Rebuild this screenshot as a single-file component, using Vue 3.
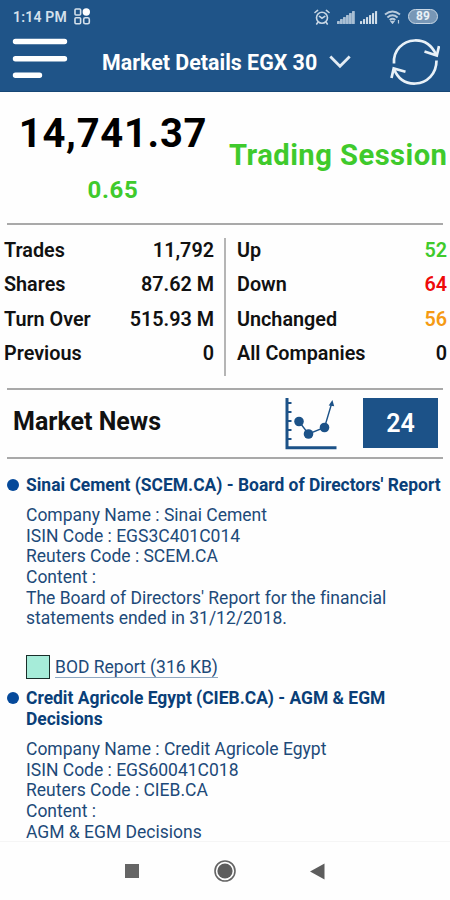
<script setup>
import { ref } from 'vue';

const index = ref({ name: 'Market Details EGX 30', value: '14,741.37', change: '0.65', status: 'Trading Session' });

const totals = [
    { label: 'Trades', value: '11,792' },
    { label: 'Shares', value: '87.62 M' },
    { label: 'Turn Over', value: '515.93 M' },
    { label: 'Previous', value: '0' }
];

const companies = [
    { label: 'Up', value: '52', type: 'up' },
    { label: 'Down', value: '64', type: 'down' },
    { label: 'Unchanged', value: '56', type: 'same' },
    { label: 'All Companies', value: '0' }
];

const news = [
    {
        title: ["Sinai Cement (SCEM.CA) - Board of Directors' Report"],
        lines: [
            'Company Name : Sinai Cement',
            'ISIN Code : EGS3C401C014',
            'Reuters Code : SCEM.CA',
            'Content :',
            'The Board of Directors\' Report for the financial',
            'statements ended in 31/12/2018.'
        ],
        file: 'BOD Report (316 KB)'
    },
    {
        title: ['Credit Agricole Egypt (CIEB.CA) - AGM & EGM', 'Decisions'],
        lines: [
            'Company Name : Credit Agricole Egypt',
            'ISIN Code : EGS60041C018',
            'Reuters Code : CIEB.CA',
            'Content :',
            'AGM & EGM Decisions'
        ]
    }
];

const signalBars = [3, 5, 7, 9, 11, 13];
</script>

<template>
    <div class="screen">
        <header>
            <div class="status-bar">
                <span class="time">1:14 PM</span>
                <svg class="apps" width="17" height="17" viewBox="0 0 17 17" fill="none" stroke="#d5e1ec" stroke-width="1.6">
                    <rect x="1" y="1" width="5.6" height="6" rx="1" />
                    <circle cx="12.3" cy="4" r="3.7" fill="#fff" stroke="none" />
                    <rect x="1" y="9.8" width="5.6" height="6" rx="1" />
                    <rect x="9.7" y="9.8" width="5.6" height="6" rx="1.6" />
                </svg>
                <div class="status-icons">
                    <svg width="16" height="16" viewBox="0 0 16 16" fill="none" stroke="#c8d7e5" stroke-width="1.6" stroke-linecap="round">
                        <circle cx="8" cy="8.7" r="5.5" />
                        <path d="M1 3.5L3.6 1.4M15 3.5L12.4 1.4M5.5 7.4L8 9.2L10.8 7.4M3.7 13.5L2.7 15M12.3 13.5L13.3 15" />
                    </svg>
                    <svg v-for="n in 2" :key="n" class="signal" width="18" height="14" viewBox="0 0 18 14" :fill="n === 1 ? '#a9bfd4' : '#cfdce8'">
                        <rect v-for="(h, i) in signalBars" :key="h" :x="i * 3" :y="14 - h" :width="n === 1 ? 2.8 : 2.1" :height="h" rx="0.6" />
                    </svg>
                    <svg class="wifi" width="17" height="14" viewBox="0 0 17 14" fill="none" stroke="#b9cbdc" stroke-width="2">
                        <path d="M1 4.5Q8.5 -1.5 16 4.5M3.4 7.4Q8.5 3 13.6 7.4M5.7 10Q8.5 7.6 11.3 10" />
                        <path d="M7 11.3L8.5 13.3L10 11.3ZM14.5 10V13.5" stroke-width="1.2" fill="#b9cbdc" />
                    </svg>
                    <span class="battery">89</span>
                </div>
            </div>
            <div class="toolbar">
                <svg class="menu" width="56" height="42" viewBox="0 0 56 42" stroke="#fff" stroke-width="5.4" stroke-linecap="round">
                    <path d="M3.5 4.5H52.5M3.5 21.7H52.5M3.5 38.3H27.5" />
                </svg>
                <h1>{{ index.name }}</h1>
                <svg class="chevron" width="22" height="14" viewBox="0 0 22 14" fill="none" stroke="#e3ecf4" stroke-width="2.8">
                    <path d="M1.3 1.5L11 11.3L20.7 1.5" />
                </svg>
                <svg class="refresh" width="50" height="48" viewBox="0 0 50 48" fill="none" stroke="#e9f1f7" stroke-width="2.7">
                    <path d="M4 25.5C3 12 13 3 24.5 2.5C35 2 42 8 46 16.5" />
                    <path d="M34.5 13.5L46.8 17.5L49 8" />
                    <path d="M46.5 22.5C46.5 36 37 45 25.5 45.5C15 46 8 41 4 31" />
                    <path d="M1.5 40L3.7 30.5L15.5 33.7" />
                </svg>
            </div>
        </header>

        <section class="summary">
            <div class="price">
                <strong>{{ index.value }}</strong>
                <span>{{ index.change }}</span>
            </div>
            <div class="session">{{ index.status }}</div>
        </section>

        <section class="stats">
            <ul class="totals">
                <li v-for="item in totals" :key="item.label">
                    <span>{{ item.label }}</span>
                    <span>{{ item.value }}</span>
                </li>
            </ul>
            <ul class="companies">
                <li v-for="item in companies" :key="item.label">
                    <span>{{ item.label }}</span>
                    <span :class="item.type">{{ item.value }}</span>
                </li>
            </ul>
        </section>

        <section class="news-header">
            <h2>Market News</h2>
            <svg width="52" height="54" viewBox="0 0 52 54" fill="none" stroke="#1c5288">
                <path d="M2 1V52M0.5 50.8H51.5" stroke-width="3" />
                <path d="M3 6H6.5M3 15H6.5M3 24H6.5M3 33H6.5M3 42H6.5" stroke-width="1.8" />
                <path d="M14 24.5L23.5 37L39.5 30.5L46.5 7" stroke-width="1.4" />
                <path d="M43.7 8.5L47.4 3L49.2 9.3Z" fill="#1c5288" stroke="none" />
                <g fill="#1c5288" stroke="none">
                    <circle cx="14" cy="24.5" r="4.8" />
                    <circle cx="23.5" cy="37" r="4.8" />
                    <circle cx="39.5" cy="30.5" r="4.8" />
                </g>
            </svg>
            <span class="count">24</span>
        </section>

        <main>
            <article v-for="item in news" :key="item.title[0]">
                <i class="bullet"></i>
                <div class="content">
                    <h3><div v-for="line in item.title" :key="line">{{ line }}</div></h3>
                    <p v-for="line in item.lines" :key="line">{{ line }}</p>
                    <a v-if="item.file"><i class="file-icon"></i><span>{{ item.file }}</span></a>
                </div>
            </article>
        </main>

        <footer>
            <svg width="14" height="14"><rect width="14" height="14" fill="#656565" /></svg>
            <svg width="24" height="24" viewBox="0 0 24 24">
                <circle cx="12" cy="12" r="10" fill="none" stroke="#656565" stroke-width="1.6" />
                <circle cx="12" cy="12" r="7.6" fill="#5d5d5d" />
            </svg>
            <svg width="15" height="17" viewBox="0 0 15 17"><path d="M0 8.5L14.5 0.5V16.5Z" fill="#5d5d5d" /></svg>
        </footer>
    </div>
</template>

<style>
body {
    margin: 0;
    background-color: #fefefe;
}
</style>

<style scoped>
.screen {
    display: flex;
    flex-direction: column;
    width: 450px;
    height: 900px;
    overflow: hidden;
    background-color: #fefefe;
    color: #111111;
    font-family: Roboto, "Liberation Sans", sans-serif;
    font-variant-ligatures: none;
}

h1,
h2,
h3,
p,
ul {
    margin: 0;
    padding: 0;
    list-style: none;
    white-space: nowrap;
}

svg {
    display: block;
    flex: none;
}

header {
    flex: none;
    height: 92px;
    box-sizing: border-box;
    background-color: #1f5488;
    border-bottom: 1px solid #174775;
}

.status-bar {
    display: flex;
    align-items: center;
    height: 33px;
    padding: 0 12px 0 13px;
    box-sizing: border-box;
}

.time {
    width: 61px;
    color: #d5e1ec;
    font-size: 14px;
    font-weight: 600;
    letter-spacing: 0.2px;
}

.status-icons {
    display: flex;
    align-items: center;
    margin-left: auto;
}

.signal {
    margin-left: 5.5px;
}

.status-icons svg:first-child {
    margin-right: 1px;
}

.wifi {
    margin-left: 6px;
}

.battery {
    width: 30px;
    height: 15px;
    margin-left: 7px;
    box-sizing: border-box;
    border: 1.5px solid #c8d7e5;
    border-radius: 8px;
    background-color: #7897b6;
    color: #e9f1f7;
    font-size: 12px;
    font-weight: 700;
    line-height: 13px;
    text-align: center;
}

.toolbar {
    display: flex;
    align-items: flex-start;
    height: 57px;
    padding-left: 12px;
}

.menu {
    margin-top: 4px;
}

.toolbar h1 {
    width: 216px;
    margin: 16px 0 0 34px;
    color: #ffffff;
    font-size: 21.4px;
    font-weight: 700;
    line-height: 28px;
}

.chevron {
    margin: 22px 0 0 11px;
}

.refresh {
    margin: 5px 0 0 39px;
}

.summary {
    display: flex;
    flex: none;
    height: 131px;
    margin: 0 7px;
    border-bottom: 2px solid #a9a9a9;
}

.price {
    display: flex;
    flex: none;
    flex-direction: column;
    align-items: center;
    width: 212px;
    padding-top: 18px;
}

.price strong {
    color: #000000;
    font-size: 40px;
    font-weight: 700;
    line-height: 48px;
    letter-spacing: 0.7px;
}

.price span {
    margin-top: 17px;
    color: #3fca2c;
    font-size: 24px;
    font-weight: 700;
    line-height: 30px;
    letter-spacing: 0.7px;
}

.session {
    margin: 45px 0 0 10px;
    color: #3fca2c;
    font-size: 29.2px;
    font-weight: 700;
    line-height: 36px;
    letter-spacing: 0.45px;
    white-space: nowrap;
}

.stats {
    display: flex;
    flex: none;
    height: 138px;
    padding: 13px 3px 12px 4px;
}

.stats ul {
    font-size: 19.8px;
    font-weight: 600;
}

.stats li {
    display: flex;
    justify-content: space-between;
    height: 34.3px;
    line-height: 25px;
}

.totals {
    width: 210px;
    padding-right: 10px;
    border-right: 2px solid #b5b5b5;
}

.companies {
    flex: 1;
    padding-left: 11px;
}

.up {
    color: #3fca2c;
}

.down {
    color: #ee0a0a;
}

.same {
    color: #f59a13;
}

.news-header {
    display: flex;
    align-items: center;
    flex: none;
    height: 67px;
    margin: 0 7px;
    padding: 0 5px 0 6px;
    border-top: 2px solid #a9a9a9;
    border-bottom: 2px solid #a9a9a9;
}

.news-header h2 {
    width: 272px;
    margin-top: -4px;
    font-size: 25px;
    font-weight: 700;
}

.count {
    width: 75px;
    height: 50px;
    margin: -2px 0 0 26px;
    background-color: #1c5288;
    color: #ffffff;
    font-size: 25px;
    font-weight: 600;
    line-height: 52px;
    text-align: center;
}

main {
    flex: 1;
    min-height: 0;
    padding-top: 16px;
    overflow: hidden;
    color: #1d4a79;
    font-size: 17.5px;
    line-height: 20.65px;
}

article {
    display: flex;
    padding-left: 7px;
}

.bullet {
    flex: none;
    width: 12px;
    height: 12px;
    margin: 4px 7px 0 0;
    border-radius: 50%;
    background-color: #05499a;
}

article h3 {
    margin-bottom: 9.5px;
    color: #0a3f78;
    font-size: 17.45px;
    font-weight: 700;
}

article a {
    display: flex;
    align-items: center;
    height: 26px;
    margin: 25px 0 8px;
}

article a span {
    margin-top: 2px;
    border-bottom: 1px solid #8fa9c2;
    line-height: 19px;
}

.file-icon {
    width: 22px;
    height: 22px;
    margin-right: 5px;
    border: 1.5px solid #1a2e2a;
    background-color: #a6ecd9;
}

footer {
    display: flex;
    align-items: center;
    justify-content: center;
    gap: 74px;
    flex: none;
    height: 59px;
    box-sizing: border-box;
    border-top: 1px solid #f5f5f5;
    background-color: #fefefe;
}

footer svg:last-child {
    margin-left: -1px;
}
</style>
